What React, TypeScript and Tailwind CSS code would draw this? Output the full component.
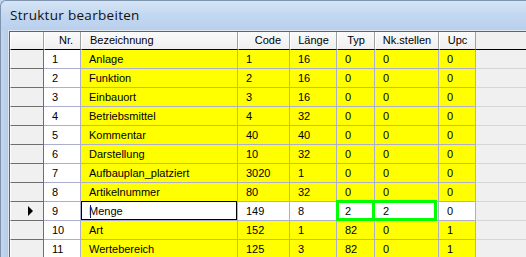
const rows = [
  { nr: "1", name: "Anlage", code: "1", len: "16", typ: "0", nk: "0", upc: "0" },
  { nr: "2", name: "Funktion", code: "2", len: "16", typ: "0", nk: "0", upc: "0" },
  { nr: "3", name: "Einbauort", code: "3", len: "16", typ: "0", nk: "0", upc: "0" },
  { nr: "4", name: "Betriebsmittel", code: "4", len: "32", typ: "0", nk: "0", upc: "0" },
  { nr: "5", name: "Kommentar", code: "40", len: "40", typ: "0", nk: "0", upc: "0" },
  { nr: "6", name: "Darstellung", code: "10", len: "32", typ: "0", nk: "0", upc: "0" },
  { nr: "7", name: "Aufbauplan_platziert", code: "3020", len: "1", typ: "0", nk: "0", upc: "0" },
  { nr: "8", name: "Artikelnummer", code: "80", len: "32", typ: "0", nk: "0", upc: "0" },
  { nr: "9", name: "Menge", code: "149", len: "8", typ: "2", nk: "2", upc: "0" },
  { nr: "10", name: "Art", code: "152", len: "1", typ: "82", nk: "0", upc: "1" },
  { nr: "11", name: "Wertebereich", code: "125", len: "3", typ: "82", nk: "0", upc: "1" },
];

// current row (being edited)
const CURRENT = 8;

function HeaderCell({ children, className = "" }: { children?: React.ReactNode; className?: string }) {
  return (
    <div
      className={`h-[18px] bg-gradient-to-b from-[#fafafa] to-[#efefef] border-r border-r-[#a0a0a0] border-l border-l-white border-b border-b-black flex items-center ${className}`}
    >
      {children}
    </div>
  );
}

function Cell({
  children,
  yellow,
  className = "",
}: {
  children?: React.ReactNode;
  yellow?: boolean;
  className?: string;
}) {
  return (
    <div
      className={`relative h-[19px] border-r border-b border-[#adadcf] flex items-center pl-[8px] ${
        yellow ? "bg-[#ffff00]" : "bg-white"
      } ${className}`}
    >
      {children}
    </div>
  );
}

function RowHeader({ current }: { current: boolean }) {
  return (
    <div className="h-[19px] bg-[#f0f0f0] border-r border-b border-[#6e6e6e] border-l border-l-white flex items-center pl-[17px]">
      {current && (
        <svg width="6" height="10" viewBox="0 0 6 10">
          <path d="M0 0 L5 5 L0 10 Z" fill="#000" />
        </svg>
      )}
    </div>
  );
}

export default function App() {
  return (
    <div className="w-[526px] h-[257px] overflow-hidden bg-[#c3d7ef] text-black font-['Liberation_Sans',Arial,sans-serif]">
      {/* title bar */}
      <div className="h-[30px] border-t border-l border-[#7d93ae] bg-gradient-to-b from-[#d6e5f6] via-[#c2d7f0] to-[#b9d0ec] flex items-center pl-[9px] rounded-tl-[6px]">
        <span className="text-[13.5px] font-['Open_Sans','Noto_Sans',sans-serif] tracking-[0.3px] text-[#111]">
          Struktur bearbeiten
        </span>
      </div>

      <div className="flex border-l border-[#7d93ae]">
        <div className="w-[7px] bg-gradient-to-r from-[#c3d7ef] to-[#b6cde9]" />
        <div className="flex-1 border-l border-t border-[#dfe7f0]">
          <div className="border-l border-t border-[#646464] bg-[#f0f0f0] text-[11px] leading-none">
            <div className="grid grid-cols-[34px_37px_157px_52px_47px_38px_64px_37px_1fr]">
              <HeaderCell />
              <HeaderCell className="justify-end pr-[7px]">Nr.</HeaderCell>
              <HeaderCell className="pl-[8px]">Bezeichnung</HeaderCell>
              <HeaderCell className="justify-end pr-[8px]">Code</HeaderCell>
              <HeaderCell className="justify-center">Länge</HeaderCell>
              <HeaderCell className="justify-center">Typ</HeaderCell>
              <HeaderCell className="justify-center">Nk.stellen</HeaderCell>
              <HeaderCell className="justify-center">Upc</HeaderCell>
              <div className="h-[18px] bg-[#f0f0f0] border-b border-black" />

              {rows.map((r, i) => {
                const cur = i === CURRENT;
                const y = !cur;
                return (
                  <div key={r.nr} className="contents">
                    <RowHeader current={cur} />
                    <Cell>{r.nr}</Cell>
                    <Cell yellow={y}>
                      {cur && (
                        <>
                          <div className="absolute left-0 -top-px right-0 bottom-0 border border-black" />
                          <span className="absolute left-[9px] top-[3px] w-px h-[13px] bg-[#1a1a6a]" />
                        </>
                      )}
                      {r.name}
                    </Cell>
                    <Cell yellow={y}>{r.code}</Cell>
                    <Cell yellow={y}>{r.len}</Cell>
                    <Cell yellow={y}>
                      {cur && (
                        <div className="absolute -left-px -top-[2px] w-[39px] h-[21px] border-[3px] border-[#00ff00]" />
                      )}
                      <span className="relative">{r.typ}</span>
                    </Cell>
                    <Cell yellow={y}>
                      {cur && (
                        <div className="absolute -left-[3px] -top-[2px] w-[65px] h-[21px] border-[3px] border-[#00ff00]" />
                      )}
                      <span className="relative">{r.nk}</span>
                    </Cell>
                    <Cell yellow={y}>{r.upc}</Cell>
                    <div className="h-[19px] bg-[#f0f0f0] border-b border-[#d6d6d6]" />
                  </div>
                );
              })}
            </div>
          </div>
        </div>
      </div>
    </div>
  );
}
